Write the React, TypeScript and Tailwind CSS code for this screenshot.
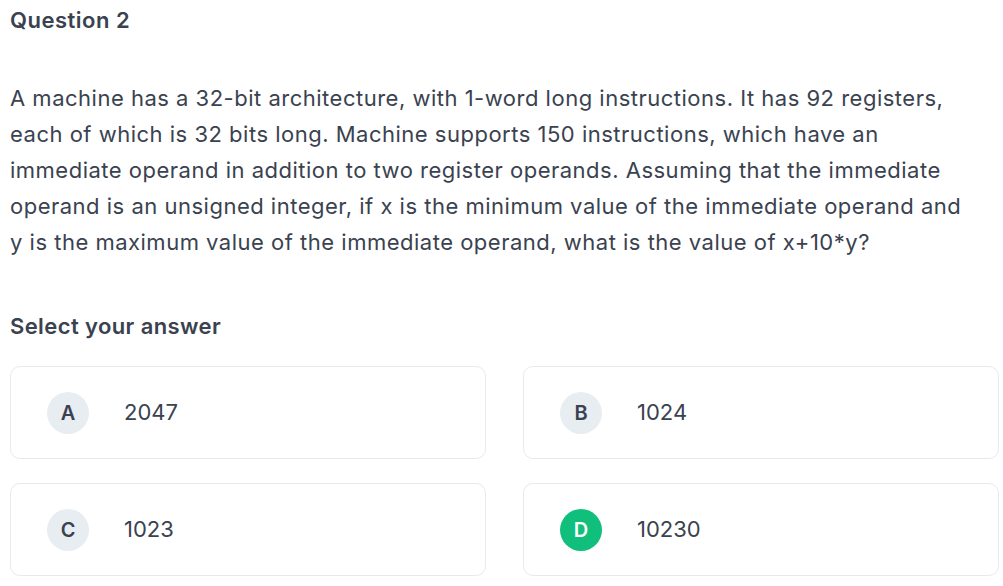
import React from 'react';

type Option = { key: string; value: string; correct?: boolean };

const options: Option[] = [
  { key: 'A', value: '2047' },
  { key: 'B', value: '1024' },
  { key: 'C', value: '1023' },
  { key: 'D', value: '10230', correct: true },
];

const OptionCard: React.FC<{ option: Option }> = ({ option }) => (
  <div className="flex h-[93px] items-center rounded-[10px] border border-[#e6eaef] bg-white pl-[36px]">
    <span
      className={
        option.correct
          ? 'flex h-[42px] w-[42px] items-center justify-center rounded-full bg-[#0fbf7b] text-[20px] font-semibold text-white'
          : 'flex h-[42px] w-[42px] items-center justify-center rounded-full bg-[#e8edf2] text-[20px] font-semibold text-[#3a4250]'
      }
    >
      {option.key}
    </span>
    <span className="ml-[35px] text-[22px] text-[#3a4250]">{option.value}</span>
  </div>
);

export default function App() {
  return (
    <div className="min-h-[586px] w-[1003px] bg-white pl-[10px] pr-[4px] pt-[6px] text-[#3a4250] [font-family:Inter,'Noto_Sans',sans-serif]">
      <h2 className="text-[22px] font-semibold leading-[28px] tracking-[0.5px]">Question 2</h2>

      <p className="mt-[46px] whitespace-nowrap text-[22px] leading-[36px] tracking-[0.5px]">
        A machine has a 32-bit architecture, with 1-word long instructions. It has 92 registers,
        <br />
        each of which is 32 bits long. Machine supports 150 instructions, which have an
        <br />
        immediate operand in addition to two register operands. Assuming that the immediate
        <br />
        operand is an unsigned integer, if x is the minimum value of the immediate operand and
        <br />
        y is the maximum value of the immediate operand, what is the value of x+10*y?
      </p>

      <h3 className="mt-[52px] text-[22px] font-semibold leading-[28px] tracking-[0.4px]">
        Select your answer
      </h3>

      <div className="mt-[26px] grid grid-cols-2 gap-x-[37px] gap-y-[24px]">
        {options.map((o) => (
          <OptionCard key={o.key} option={o} />
        ))}
      </div>
    </div>
  );
}
